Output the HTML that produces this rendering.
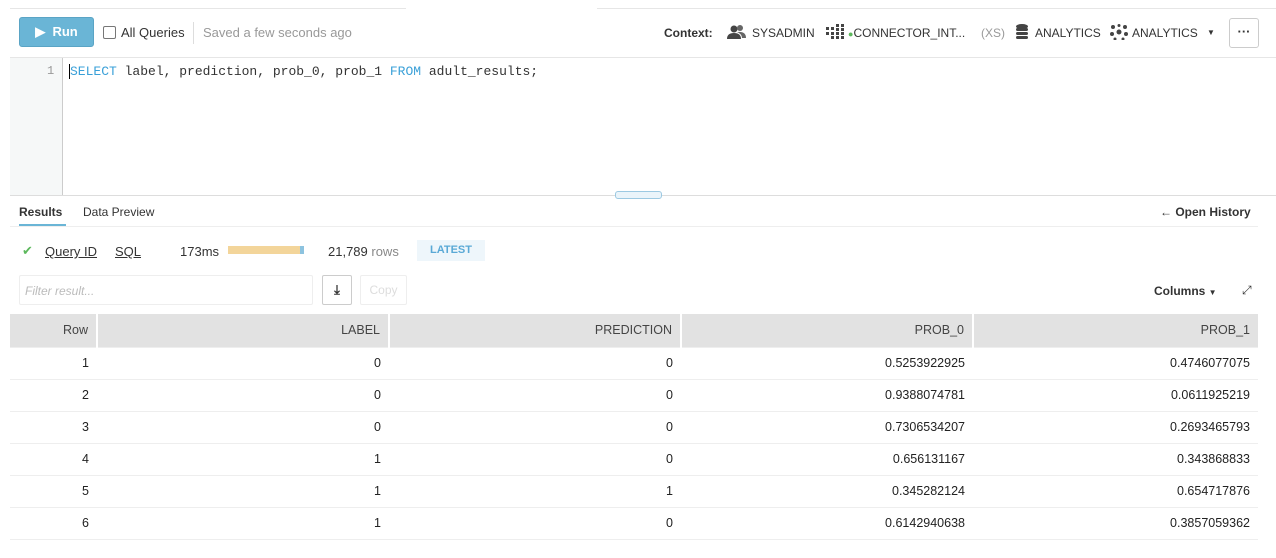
<!DOCTYPE html>
<html><head><style>
*{box-sizing:border-box;margin:0;padding:0}
body{width:1276px;height:558px;background:#fff;font-family:"Liberation Sans",sans-serif;font-size:13px;color:#333;position:relative;overflow:hidden}
.a{position:absolute;white-space:nowrap}
.c{top:26px;font-size:12px}
.run{left:19px;top:17px;width:75px;height:30px;background:#6ab5d6;border:1px solid #5aa4c5;border-radius:3px;color:#fff;font-weight:bold;font-size:13px;line-height:28px;text-align:center}
table{border-collapse:collapse;position:absolute;left:10px;top:314px;width:1248px;font-size:12.5px}
td,th{text-align:right;padding:0 8px;height:32px;border-bottom:1px solid #eee}
th{background:#e2e2e2;font-weight:normal;color:#444;border-right:2px solid #fff;height:33px}
td{color:#222}
</style></head><body>
<div class="a" style="left:10px;top:8px;width:396px;height:1px;background:#e6e6e6"></div>
<div class="a" style="left:597px;top:8px;width:679px;height:1px;background:#e6e6e6"></div>
<div class="a run">&#9654;&nbsp; Run</div>
<div class="a" style="left:103px;top:26px;width:13px;height:13px;border:1px solid #777;border-radius:2px"></div>
<div class="a" style="left:121px;top:25px">All Queries</div>
<div class="a" style="left:193px;top:22px;width:1px;height:22px;background:#ddd"></div>
<div class="a" style="left:203px;top:25px;color:#999">Saved a few seconds ago</div>
<div class="a c" style="left:664px;font-weight:bold">Context:</div>
<svg class="a" style="left:727px;top:24px" width="20" height="16" viewBox="0 0 20 16"><circle cx="7" cy="5" r="3.5" fill="#444"/><path d="M0 15 Q0 9 7 9 Q14 9 14 15Z" fill="#444"/><circle cx="13" cy="4" r="3" fill="#666"/><path d="M10 8 Q19 7 19 14 H15 Q15 10 10 8Z" fill="#666"/></svg>
<div class="a c" style="left:752px">SYSADMIN</div>
<svg class="a" style="left:826px;top:24px" width="18" height="16" viewBox="0 0 18 16"><g fill="#444"><rect x="0" y="3" width="3" height="3"/><rect x="5" y="3" width="3" height="3"/><rect x="10" y="0" width="3" height="3"/><rect x="15" y="0" width="3" height="3"/><rect x="0" y="8" width="3" height="3"/><rect x="5" y="8" width="3" height="3"/><rect x="10" y="4" width="3" height="3"/><rect x="15" y="4" width="3" height="3"/><rect x="10" y="8" width="3" height="3"/><rect x="15" y="8" width="3" height="3"/><rect x="5" y="12" width="3" height="3"/><rect x="10" y="12" width="3" height="3"/><rect x="15" y="12" width="3" height="3"/></g></svg>
<div class="a c" style="left:848px"><span style="color:#5cb85c;font-size:9px">&#9679;</span>CONNECTOR_INT...</div>
<div class="a c" style="left:981px;color:#999">(XS)</div>
<svg class="a" style="left:1016px;top:24px" width="12" height="15" viewBox="0 0 12 15"><g fill="#444"><ellipse cx="6" cy="2.5" rx="6" ry="2.5"/><rect x="0" y="4" width="12" height="3" rx="1.5"/><rect x="0" y="8" width="12" height="3" rx="1.5"/><rect x="0" y="12" width="12" height="3" rx="1.5"/></g></svg>
<div class="a c" style="left:1035px">ANALYTICS</div>
<svg class="a" style="left:1110px;top:24px" width="18" height="16" viewBox="0 0 18 16"><g fill="#444"><circle cx="9" cy="8" r="2.5"/><circle cx="3" cy="3" r="2"/><circle cx="15" cy="3" r="2"/><circle cx="2" cy="10" r="2"/><circle cx="16" cy="10" r="2"/><circle cx="5" cy="15" r="1.5"/><circle cx="13" cy="15" r="1.5"/><circle cx="9" cy="1.5" r="1.5"/></g></svg>
<div class="a c" style="left:1132px">ANALYTICS</div>
<div class="a" style="left:1207px;top:28px;font-size:8px">&#9660;</div>
<div class="a" style="left:1229px;top:18px;width:30px;height:30px;border:1px solid #ccc;border-radius:3px;text-align:center;line-height:26px;font-weight:bold">&middot;&middot;&middot;</div>
<div class="a" style="left:10px;top:57px;width:1266px;height:1px;background:#e6e6e6"></div>
<div class="a" style="left:10px;top:58px;width:53px;height:137px;background:#f6f8f8;border-right:1px solid #ccc"></div>
<div class="a" style="left:47px;top:64px;font-family:'Liberation Mono',monospace;font-size:12px;color:#999">1</div>
<div class="a" style="left:69px;top:64px;font-family:'Liberation Mono',monospace;font-size:13px;color:#333;border-left:1px solid #000"><span style="color:#3aa0d8">SELECT</span> label, prediction, prob_0, prob_1 <span style="color:#3aa0d8">FROM</span> adult_results;</div>
<div class="a" style="left:10px;top:195px;width:1266px;height:1px;background:#ddd"></div>
<div class="a" style="left:615px;top:191px;width:47px;height:8px;border:1px solid #9cc9e2;border-radius:3px;background:#eaf4fa"></div>
<div class="a" style="left:19px;top:205px;font-size:12px;font-weight:bold">Results</div>
<div class="a" style="left:83px;top:205px;font-size:12px">Data Preview</div>
<div class="a" style="left:19px;top:224px;width:47px;height:2px;background:#6ab5d6"></div>
<div class="a" style="left:10px;top:226px;width:1248px;height:1px;background:#eee"></div>
<div class="a" style="left:1160px;top:205px;font-size:12px;font-weight:bold">&#8592; Open History</div>
<div class="a" style="left:22px;top:243px;color:#5cb85c">&#10004;</div>
<div class="a" style="left:45px;top:244px;text-decoration:underline">Query ID</div>
<div class="a" style="left:115px;top:244px;text-decoration:underline">SQL</div>
<div class="a" style="left:180px;top:244px">173ms</div>
<div class="a" style="left:228px;top:246px;width:72px;height:8px;background:#f3d59a"></div>
<div class="a" style="left:300px;top:246px;width:4px;height:8px;background:#8dc3df"></div>
<div class="a" style="left:328px;top:244px">21,789 <span style="color:#888">rows</span></div>
<div class="a" style="left:417px;top:240px;width:68px;height:21px;background:#eef6fb;color:#5aa9d6;font-weight:bold;font-size:11px;text-align:center;line-height:21px">LATEST</div>
<div class="a" style="left:19px;top:275px;width:294px;height:30px;border:1px solid #eee;border-radius:2px;color:#bbb;font-style:italic;font-size:12px;padding:8px 5px">Filter result...</div>
<div class="a" style="left:322px;top:275px;width:30px;height:30px;border:1px solid #ccc;border-radius:2px;text-align:center;line-height:28px;font-size:13px;font-weight:bold">&#10515;</div>
<div class="a" style="left:360px;top:275px;width:47px;height:30px;border:1px solid #eee;border-radius:2px;text-align:center;line-height:28px;color:#ddd;font-size:12px">Copy</div>
<div class="a" style="left:1154px;top:284px;font-size:12px;font-weight:bold">Columns <span style="font-size:8px">&#9660;</span></div>
<div class="a" style="left:1242px;top:283px;font-size:12px">&#10530;</div>
<table>
<tr><th style="width:87px">Row</th><th style="width:292px">LABEL</th><th style="width:292px">PREDICTION</th><th style="width:292px">PROB_0</th><th style="border-right:0">PROB_1</th></tr>
<tr><td>1</td><td>0</td><td>0</td><td>0.5253922925</td><td>0.4746077075</td></tr>
<tr><td>2</td><td>0</td><td>0</td><td>0.9388074781</td><td>0.0611925219</td></tr>
<tr><td>3</td><td>0</td><td>0</td><td>0.7306534207</td><td>0.2693465793</td></tr>
<tr><td>4</td><td>1</td><td>0</td><td>0.656131167</td><td>0.343868833</td></tr>
<tr><td>5</td><td>1</td><td>1</td><td>0.345282124</td><td>0.654717876</td></tr>
<tr><td>6</td><td>1</td><td>0</td><td>0.6142940638</td><td>0.3857059362</td></tr>
</table>
</body></html>
